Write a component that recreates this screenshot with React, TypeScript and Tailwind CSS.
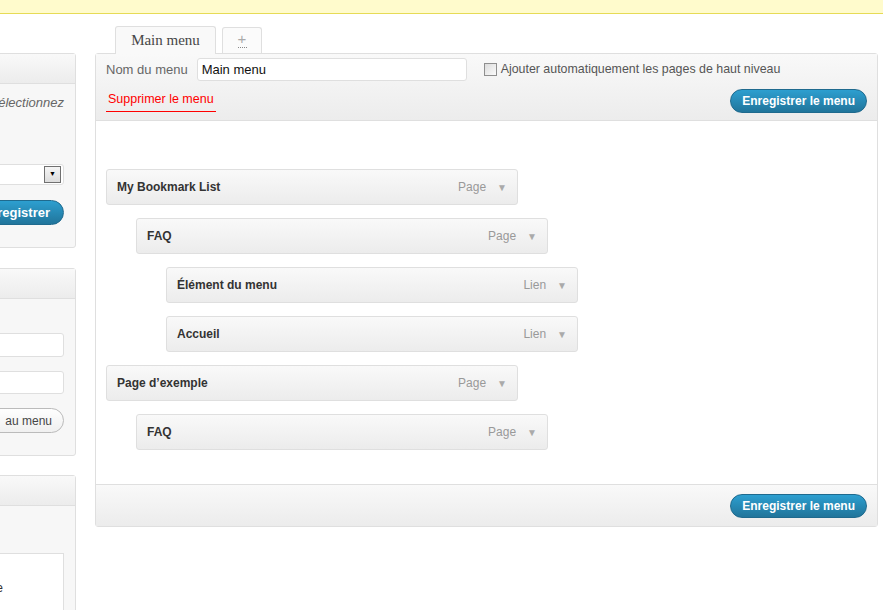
import React from "react";

type MenuItem = {
  title: string;
  kind: string;
  depth: number;
};

const ITEMS: MenuItem[] = [
  { title: "My Bookmark List", kind: "Page", depth: 0 },
  { title: "FAQ", kind: "Page", depth: 1 },
  { title: "Élément du menu", kind: "Lien", depth: 2 },
  { title: "Accueil", kind: "Lien", depth: 2 },
  { title: "Page d’exemple", kind: "Page", depth: 0 },
  { title: "FAQ", kind: "Page", depth: 1 },
];

const INDENT = ["ml-0", "ml-[30px]", "ml-[60px]"];

function BlueButton({ label, className = "" }: { label: string; className?: string }) {
  return (
    <button
      className={`h-[24px] rounded-full border border-[#1f6a8e] bg-linear-to-b from-[#2d9fd0] to-[#21759b] px-[11px] text-[12px] font-bold text-white whitespace-nowrap ${className}`}
    >
      {label}
    </button>
  );
}

function SidePanel({ title, children, className = "" }: { title: string; children: React.ReactNode; className?: string }) {
  return (
    <div className={`rounded-[3px] border border-[#dfdfdf] bg-[#f7f7f7] ${className}`}>
      <div className="h-[30px] border-b border-[#dfdfdf] bg-linear-to-b from-[#f9f9f9] to-[#ececec] px-[10px] text-[13px] font-bold leading-[30px] text-[#464646]">
        {title}
      </div>
      {children}
    </div>
  );
}

function ItemRow({ item }: { item: MenuItem }) {
  return (
    <div
      className={`${INDENT[item.depth]} flex h-[36px] w-[412px] items-center justify-between rounded-[3px] border border-[#dfdfdf] bg-linear-to-b from-[#f9f9f9] to-[#ececec] pl-[10px] pr-[10px]`}
    >
      <span className="text-[12px] font-bold text-[#333]">{item.title}</span>
      <span className="flex items-center gap-[11px] text-[12px] text-[#999]">
        {item.kind}
        <span className="text-[10px] text-[#aaa]">▼</span>
      </span>
    </div>
  );
}

export default function App() {
  return (
    <div className="relative h-[610px] w-[883px] overflow-hidden bg-white font-['Liberation_Sans',Arial,sans-serif]">
      {/* notice bar */}
      <div className="h-[14px] overflow-hidden border-b border-[#e6db55] bg-[#fffbcc]">
        <p className="-mt-[12px] ml-[-602px] whitespace-nowrap text-[12px] leading-[16px] text-[#333]">Vos menus ont été mis à jour, vous pouvez les modifier dès maintenant ici y</p>
      </div>

      <div className="flex items-start pt-[12px]">
        {/* left column, cropped */}
        <div className="ml-[-206px] mt-[27px] flex w-[282px] shrink-0 flex-col">
          <SidePanel title="Emplacement des thèmes" className="h-[195px]">
            <div className="px-[11px] pt-[10px]">
              <p className="whitespace-nowrap text-right text-[13px] italic leading-[18px] text-[#666]">
                Votre thème gère un menu, sélectionnez
                <br />
                <span className="mr-[90px] inline-block">le menu à utiliser.</span>
              </p>
              <div className="mt-[34px] flex h-[21px] items-center justify-end rounded-[3px] border border-[#dfdfdf] bg-white pr-[2px]">
                <span className="flex h-[17px] w-[17px] items-center justify-center border border-[#707070] bg-linear-to-b from-[#f5f5f5] to-[#dcdcdc] text-[7px] text-black">
                  ▼
                </span>
              </div>
              <div className="mt-[15px] flex justify-end">
                <BlueButton label="Enregistrer" className="h-[25px] px-[13px] text-[13px]" />
              </div>
            </div>
          </SidePanel>

          <SidePanel title="Liens personnalisés" className="mt-[20px] h-[188px]">
            <div className="px-[11px] pt-[34px]">
              <div className="h-[24px] rounded-[3px] border border-[#dfdfdf] bg-white" />
              <div className="mt-[14px] h-[23px] rounded-[3px] border border-[#dfdfdf] bg-white" />
              <div className="mt-[14px] flex justify-end">
                <button className="h-[25px] rounded-full border border-[#bbb] bg-linear-to-b from-[#fefefe] to-[#f0f0f0] px-[11px] text-[12px] text-[#464646]">
                  Ajouter&nbsp;&nbsp;au menu
                </button>
              </div>
            </div>
          </SidePanel>

          <SidePanel title="Pages" className="mt-[19px] h-[160px]">
            <div className="px-[11px] pt-[47px]">
              <div className="h-[80px] border border-[#dfdfdf] bg-white pr-[60px] pt-[25px] text-right text-[12px] text-[#333]">
                Page d’accueil de démonstration e
              </div>
            </div>
          </SidePanel>
        </div>

        {/* main */}
        <div className="ml-[19px] w-[783px] shrink-0">
          <div className="flex items-end pl-[20px]">
            <div className="relative z-10 -mb-px h-[28px] w-[101px] rounded-t-[3px] border border-b-0 border-[#dfdfdf] bg-[#f9f9f9] text-center font-['Liberation_Serif',Georgia,serif] text-[15px] leading-[26px] text-[#464646]">
              Main menu
            </div>
            <div className="ml-[6px] flex h-[26px] w-[40px] flex-col items-center rounded-t-[3px] border border-b-0 border-[#dfdfdf] bg-[#fbfbfb] pt-[3px]">
              <span className="text-[15px] leading-[15px] text-[#aaa]">+</span>
              <span className="mt-[1px] w-[9px] border-b border-dotted border-[#888]" />
            </div>
          </div>

          <div className="rounded-[3px] border border-[#dfdfdf]">
            {/* header */}
            <div className="h-[67px] border-b border-[#dfdfdf] bg-linear-to-b from-[#f9f9f9] to-[#ececec] pl-[10px] pr-[10px]">
              <div className="flex items-center pt-[4px]">
                <span className="text-[13px] text-[#666]">Nom du menu</span>
                <input
                  readOnly
                  value="Main menu"
                  className="ml-[9px] h-[23px] w-[270px] rounded-[3px] border border-[#dfdfdf] bg-white px-[4px] text-[13px] text-[#111] outline-none"
                />
                <span className="ml-[17px] inline-block h-[13px] w-[13px] border border-[#8f8f8f] bg-linear-to-br from-[#dcdcdc] to-[#fbfbfb]" />
                <span className="ml-[4px] text-[12.4px] text-[#555]">Ajouter automatiquement les pages de haut niveau</span>
              </div>
              <div className="mt-[8px] flex items-center justify-between">
                <span className="border-b border-[#ff0000] px-[2px] pb-[2px] text-[12.5px] text-[#ff0000]">Supprimer le menu</span>
                <BlueButton label="Enregistrer le menu" />
              </div>
            </div>

            {/* body */}
            <div className="flex h-[363px] flex-col gap-[13px] bg-white pl-[10px] pt-[48px]">
              {ITEMS.map((item, i) => (
                <ItemRow key={i} item={item} />
              ))}
            </div>

            {/* footer */}
            <div className="flex h-[42px] items-center justify-end border-t border-[#dfdfdf] bg-linear-to-b from-[#f9f9f9] to-[#ececec] pr-[10px]">
              <BlueButton label="Enregistrer le menu" />
            </div>
          </div>
        </div>
      </div>
    </div>
  );
}
